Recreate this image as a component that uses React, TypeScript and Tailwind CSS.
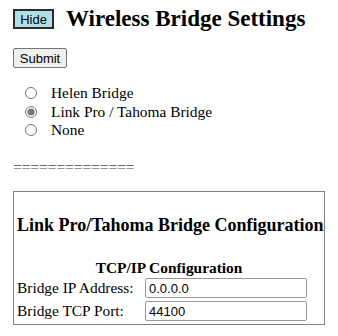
export default function App() {
  return (
    <div className="min-h-[336px] bg-white px-[13px] pt-[5px] font-['Liberation_Serif',serif] text-[15.4px] leading-[18.5px] text-black">
      {/* header */}
      <div className="flex h-[28px] items-center gap-[12px]">
        <button className="h-[20px] w-[41px] border-[2px] border-[#2b2b2b] bg-[#b0e0e6] font-['Liberation_Sans',sans-serif] text-[13px] leading-none text-black">
          Hide
        </button>
        <h2 className="text-[23px] font-bold leading-[28px]">Wireless Bridge Settings</h2>
      </div>

      <div className="mt-[15px]">
        <button className="h-[20px] w-[54px] rounded-[2px] border border-[#767676] bg-[#efefef] font-['Liberation_Sans',sans-serif] text-[13px] leading-none text-black">
          Submit
        </button>
      </div>

      {/* bridge type */}
      <div className="mt-[16px] flex flex-col pl-[12px]">
        {["Helen Bridge", "Link Pro / Tahoma Bridge", "None"].map((label, i) => (
          <label key={label} className="flex h-[18.5px] items-center gap-[14px]">
            <input type="radio" name="bridge" defaultChecked={i === 1} className="m-0 h-[12px] w-[12px] accent-[#777]" />
            <span>{label}</span>
          </label>
        ))}
      </div>

      <div className="mt-[18px] leading-[18px] text-[#444]">==============</div>

      {/* config box */}
      <div className="mt-[15px] w-[312px] border border-[#808080] px-[3px] pb-[3px]">
        <h3 className="mt-[22px] whitespace-nowrap text-[18px] font-bold leading-[22px]">
          Link Pro/Tahoma Bridge Configuration
        </h3>
        <div className="mt-[23px] text-center font-bold">TCP/IP Configuration</div>
        <div className="mt-[1px] flex flex-col gap-[3px]">
          <div className="flex items-center">
            <span className="w-[128px]">Bridge IP Address:</span>
            <input
              defaultValue="0.0.0.0"
              className="h-[20px] w-[162px] rounded-[2px] border border-[#999] px-[3px] font-['Liberation_Sans',sans-serif] text-[13px] outline-none"
            />
          </div>
          <div className="flex items-center">
            <span className="w-[128px]">Bridge TCP Port:</span>
            <input
              defaultValue="44100"
              className="h-[20px] w-[162px] rounded-[2px] border border-[#999] px-[3px] font-['Liberation_Sans',sans-serif] text-[13px] outline-none"
            />
          </div>
        </div>
      </div>
    </div>
  )
}
